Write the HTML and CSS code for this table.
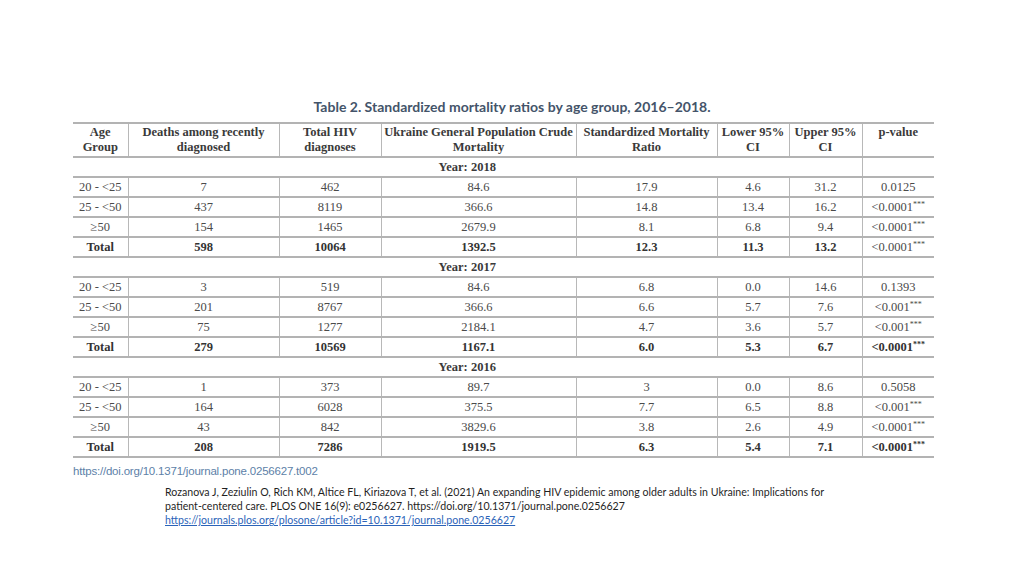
FILE: index.html
```html
<!DOCTYPE html>
<html>
<head>
<meta charset="utf-8">
<link rel="stylesheet" href="styles.css">
</head>
<body>
<main class="slide">
  <h1 class="title">Table 2. Standardized mortality ratios by age group, 2016–2018.</h1>
  <div class="figure">
    <table class="smr">
      <colgroup>
        <col class="c1"><col class="c2"><col class="c3"><col class="c4"><col class="c5"><col class="c6"><col class="c7"><col class="c8">
      </colgroup>
      <thead>
        <tr>
          <th>Age<br>Group</th>
          <th>Deaths among recently<br>diagnosed</th>
          <th>Total HIV<br>diagnoses</th>
          <th>Ukraine General Population Crude<br>Mortality</th>
          <th>Standardized Mortality<br>Ratio</th>
          <th>Lower 95%<br>CI</th>
          <th>Upper 95%<br>CI</th>
          <th class="ptop">p-value</th>
        </tr>
      </thead>
      <tbody>
        <tr class="year"><td colspan="7">Year: 2018</td><td class="pv"></td></tr>
        <tr><td>20 - &lt;25</td><td>7</td><td>462</td><td>84.6</td><td>17.9</td><td>4.6</td><td>31.2</td><td>0.0125</td></tr>
        <tr><td>25 - &lt;50</td><td>437</td><td>8119</td><td>366.6</td><td>14.8</td><td>13.4</td><td>16.2</td><td>&lt;0.0001<sup>***</sup></td></tr>
        <tr><td>≥50</td><td>154</td><td>1465</td><td>2679.9</td><td>8.1</td><td>6.8</td><td>9.4</td><td>&lt;0.0001<sup>***</sup></td></tr>
        <tr class="total"><td>Total</td><td>598</td><td>10064</td><td>1392.5</td><td>12.3</td><td>11.3</td><td>13.2</td><td class="norm">&lt;0.0001<sup>***</sup></td></tr>
        <tr class="year"><td colspan="7">Year: 2017</td><td class="pv"></td></tr>
        <tr><td>20 - &lt;25</td><td>3</td><td>519</td><td>84.6</td><td>6.8</td><td>0.0</td><td>14.6</td><td>0.1393</td></tr>
        <tr><td>25 - &lt;50</td><td>201</td><td>8767</td><td>366.6</td><td>6.6</td><td>5.7</td><td>7.6</td><td>&lt;0.001<sup>***</sup></td></tr>
        <tr><td>≥50</td><td>75</td><td>1277</td><td>2184.1</td><td>4.7</td><td>3.6</td><td>5.7</td><td>&lt;0.001<sup>***</sup></td></tr>
        <tr class="total"><td>Total</td><td>279</td><td>10569</td><td>1167.1</td><td>6.0</td><td>5.3</td><td>6.7</td><td>&lt;0.0001<sup>***</sup></td></tr>
        <tr class="year"><td colspan="7">Year: 2016</td><td class="pv"></td></tr>
        <tr><td>20 - &lt;25</td><td>1</td><td>373</td><td>89.7</td><td>3</td><td>0.0</td><td>8.6</td><td>0.5058</td></tr>
        <tr><td>25 - &lt;50</td><td>164</td><td>6028</td><td>375.5</td><td>7.7</td><td>6.5</td><td>8.8</td><td>&lt;0.001<sup>***</sup></td></tr>
        <tr><td>≥50</td><td>43</td><td>842</td><td>3829.6</td><td>3.8</td><td>2.6</td><td>4.9</td><td>&lt;0.0001<sup>***</sup></td></tr>
        <tr class="total"><td>Total</td><td>208</td><td>7286</td><td>1919.5</td><td>6.3</td><td>5.4</td><td>7.1</td><td>&lt;0.0001<sup>***</sup></td></tr>
      </tbody>
    </table>
    <div class="doi">https://doi.org/10.1371/journal.pone.0256627.t002</div>
  </div>
  <p class="cite">Rozanova J, Zeziulin O, Rich KM, Altice FL, Kiriazova T, et al. (2021) An expanding HIV epidemic among older adults in Ukraine: Implications for<br>patient-centered care. PLOS ONE 16(9): e0256627. https://doi.org/10.1371/journal.pone.0256627<br><a href="#">https://journals.plos.org/plosone/article?id=10.1371/journal.pone.0256627</a></p>
</main>
</body>
</html>
```

FILE: styles.css
```css
html, body {
  margin: 0;
  padding: 0;
  background: #ffffff;
}

.slide {
  width: 1024px;
  height: 575px;
  box-sizing: border-box;
  padding-top: 98px;
  display: flex;
  flex-direction: column;
  align-items: flex-start;
}

.title {
  align-self: stretch;
  margin: 0 0 6px 0;
  text-align: center;
  font-family: Lato, "Open Sans", sans-serif;
  font-weight: 700;
  font-size: 14px;
  line-height: 18px;
  color: #44546a;
}

.figure {
  margin-left: 73px;
}

.smr {
  border-collapse: collapse;
  table-layout: fixed;
  width: 861px;
  font-family: "Liberation Serif", "Times New Roman", serif;
  color: #4a4a4a;
  font-size: 12.5px;
}

.c1 { width: 55px; }
.c2 { width: 151px; }
.c3 { width: 102px; }
.c4 { width: 195px; }
.c5 { width: 141px; }
.c6 { width: 72px; }
.c7 { width: 73px; }
.c8 { width: 72px; }

.smr th,
.smr td {
  border-top: 2px solid #b3b3b3;
  border-bottom: 2px solid #b3b3b3;
  border-left: 1px solid #b8b8b8;
  border-right: 1px solid #b8b8b8;
  padding: 0;
  text-align: center;
  white-space: nowrap;
}

.smr th:first-child,
.smr td:first-child {
  border-left: none;
}

.smr th:last-child,
.smr td:last-child {
  border-right: none;
}

.smr th {
  height: 31px;
  font-weight: 700;
  font-size: 12.5px;
  line-height: 15px;
  color: #3a3a3a;
  vertical-align: middle;
}

.smr th.ptop {
  vertical-align: top;
  padding-top: 1px;
}

.smr td {
  height: 18px;
  line-height: 18px;
}

.smr tr.year td {
  font-weight: 700;
  color: #3a3a3a;
}

.smr tr.year td.pv {
  border-left: 1px solid #b8b8b8;
}

.smr tr.total td {
  font-weight: 700;
  color: #333333;
}

.smr tr.total td.norm {
  font-weight: 400;
  color: #4a4a4a;
}

.smr sup {
  font-size: 8px;
  line-height: 0;
  vertical-align: 4px;
}

.doi {
  margin-top: 6px;
  font-family: "Liberation Sans", Arial, sans-serif;
  font-size: 11.5px;
  line-height: 14px;
  letter-spacing: -0.2px;
  color: #5d7fa8;
}

.cite {
  margin: 7px 0 0 165px;
  font-family: Lato, "Open Sans", sans-serif;
  font-size: 10.6px;
  line-height: 14px;
  color: #1f1f1f;
}

.cite a {
  color: #2b63b8;
  text-decoration: underline;
}
```
